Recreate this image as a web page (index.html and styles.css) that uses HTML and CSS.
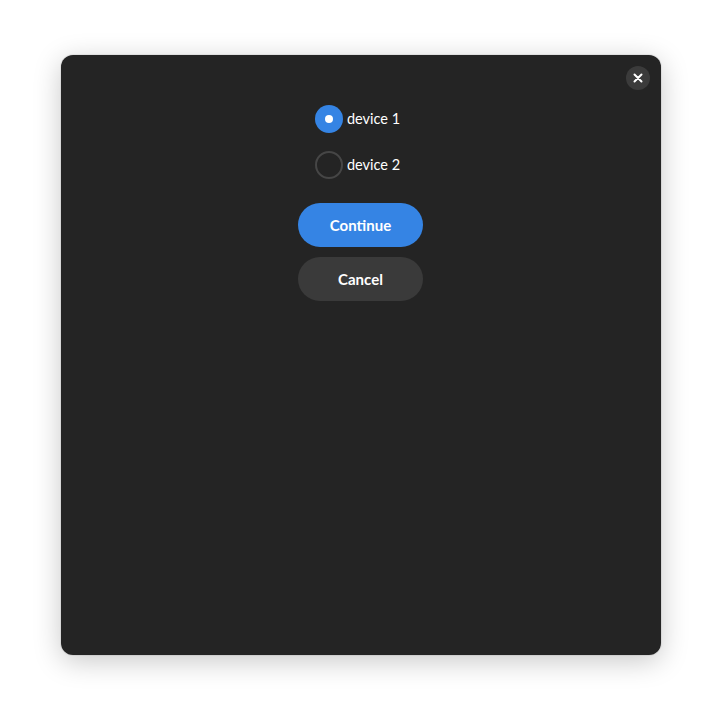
FILE: index.html
```html
<!DOCTYPE html>
<html>
<head>
<meta charset="utf-8">
<link rel="stylesheet" href="styles.css">
</head>
<body>
<div class="page">
  <div class="dialog">
    <button class="close" aria-label="Close">
      <svg width="10" height="10" viewBox="0 0 10 10"><path d="M1.5 1.5 L8.5 8.5 M8.5 1.5 L1.5 8.5" stroke="#fff" stroke-width="2" stroke-linecap="round"/></svg>
    </button>
    <div class="content">
      <div class="radios">
        <label class="radio-row"><span class="radio checked"></span><span class="label">device 1</span></label>
        <label class="radio-row"><span class="radio"></span><span class="label">device 2</span></label>
      </div>
      <button class="btn primary">Continue</button>
      <button class="btn secondary">Cancel</button>
    </div>
  </div>
</div>
</body>
</html>
```
FILE: styles.css
```css
html, body {
  margin: 0;
  padding: 0;
  background: #ffffff;
}
body {
  font-family: Lato, "Noto Sans", sans-serif;
}
.page {
  display: flex;
  justify-content: center;
  padding-top: 55px;
  padding-bottom: 67px;
}
.dialog {
  position: relative;
  width: 600px;
  height: 600px;
  background: #242424;
  border-radius: 12px;
  box-shadow: 0 6px 28px rgba(0,0,0,0.22), 0 0 0 1px rgba(0,0,0,0.06);
  box-sizing: border-box;
  padding-top: 50px;
}
.close {
  position: absolute;
  top: 11px;
  right: 11px;
  width: 24px;
  height: 24px;
  border-radius: 50%;
  border: none;
  background: #3b3b3b;
  padding: 0;
  display: flex;
  align-items: center;
  justify-content: center;
}
.content {
  display: flex;
  flex-direction: column;
  align-items: center;
}
.radios {
  display: flex;
  flex-direction: column;
  gap: 18px;
  width: 92px;
  margin-bottom: 24px;
}
.radio-row {
  display: flex;
  align-items: center;
  gap: 4px;
  height: 28px;
  color: #ffffff;
  font-size: 14.5px;
}
.label {
  padding-bottom: 2px;
}
.radio {
  width: 28px;
  height: 28px;
  border-radius: 50%;
  box-sizing: border-box;
  border: 2px solid #464646;
  flex: none;
  display: flex;
  align-items: center;
  justify-content: center;
}
.radio.checked {
  border: none;
  background: #3584e4;
}
.radio.checked::after {
  content: "";
  width: 8px;
  height: 8px;
  border-radius: 50%;
  background: #ffffff;
}
.btn {
  width: 125px;
  height: 44px;
  border-radius: 22px;
  border: none;
  color: #ffffff;
  font-family: inherit;
  font-size: 15px;
  font-weight: 700;
  padding: 0;
  margin-right: 1px;
}
.btn.primary {
  background: #3584e4;
  margin-bottom: 10px;
}
.btn.secondary {
  background: #3a3a3a;
}
```
